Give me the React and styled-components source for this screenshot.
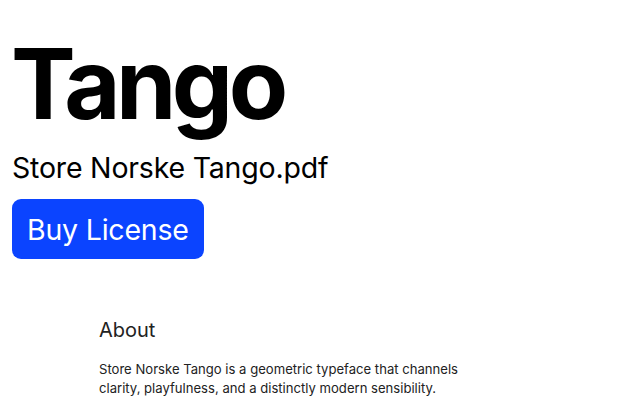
import React from "react";
import styled, { createGlobalStyle } from "styled-components";

const GlobalStyle = createGlobalStyle`
  html, body {
    margin: 0;
    padding: 0;
    background: #ffffff;
  }
  body {
    font-family: Inter, "Noto Sans", sans-serif;
    color: #000;
    overflow: hidden;
  }
`;

const Page = styled.main`
  display: flex;
  flex-direction: column;
  padding: 35px 12px 0;
`;

const Hero = styled.header`
  display: flex;
  flex-direction: column;
  align-items: flex-start;
`;

const Title = styled.h1`
  margin: 0 0 0 -1px;
  font-size: 97px;
  font-weight: 700;
  line-height: 97px;
  letter-spacing: -4.5px;
`;

const FileName = styled.p`
  margin: 19px 0 0;
  font-size: 28.5px;
  font-weight: 400;
  line-height: 34px;
  letter-spacing: -0.2px;
`;

const BuyButton = styled.button`
  margin-top: 14px;
  height: 60px;
  padding: 0 15px;
  border: none;
  border-radius: 9px;
  background: #0b44ff;
  color: #fff;
  font-family: inherit;
  font-size: 28.5px;
  font-weight: 400;
  letter-spacing: -0.2px;
  cursor: pointer;
`;

const About = styled.section`
  padding: 59px 0 0 87px;
`;

const AboutTitle = styled.h2`
  margin: 0 0 18px;
  font-size: 20px;
  font-weight: 400;
  line-height: 24px;
  color: #222;
`;

const Text = styled.p`
  margin: 0;
  max-width: 370px;
  font-size: 13.1px;
  line-height: 19px;
  color: #222;
`;

export default function App() {
  return (
    <>
      <GlobalStyle />
      <Page>
        <Hero>
          <Title>Tango</Title>
          <FileName>Store Norske Tango.pdf</FileName>
          <BuyButton>Buy License</BuyButton>
        </Hero>
        <About>
          <AboutTitle>About</AboutTitle>
          <Text>
            Store Norske Tango is a geometric typeface that channels clarity,
            playfulness, and a distinctly modern sensibility.
          </Text>
        </About>
      </Page>
    </>
  );
}
